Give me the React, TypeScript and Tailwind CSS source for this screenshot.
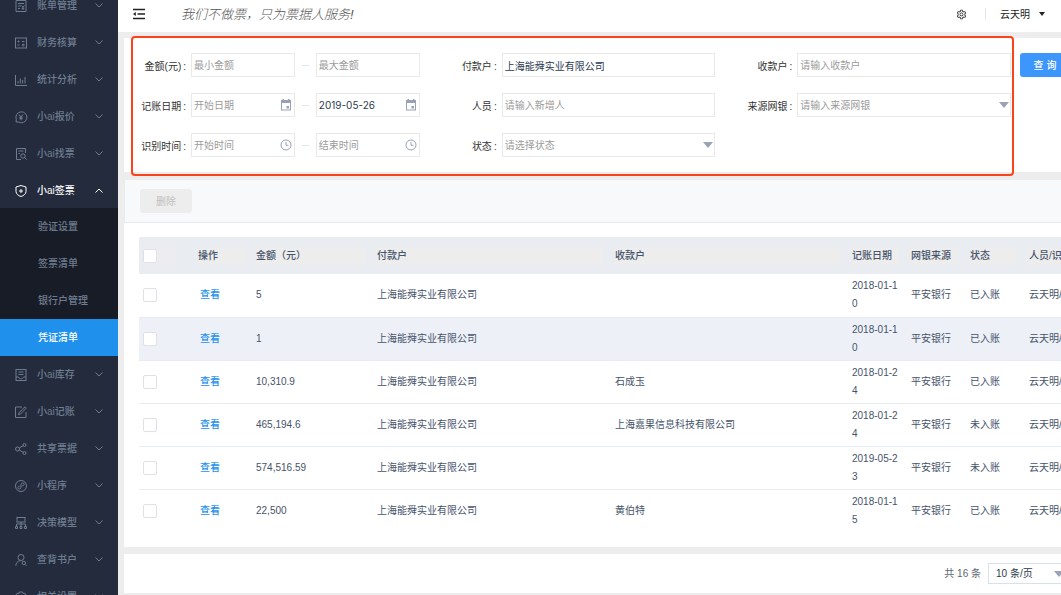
import type { ReactNode } from "react";
import { AiOutlineSetting } from "react-icons/ai";

const controlClass =
  "block h-6 w-full min-w-0 border border-[#e9e9e9] bg-white px-[2px] text-[10px] text-[#2c3a4f] outline-none placeholder:text-[#9b9b9b]";

const iconPaths: Record<string, ReactNode> = {
  bill: (
    <>
      <path d="M11 11.5H1V.5h10v11z" />
      <path d="M3 3.5h6M3 6h3M3 8.5h2M6.5 5.5L8 7.2l1.500-1.700M8 7.200V10M6.700 8.300h2.600" />
    </>
  ),
  calc: (
    <>
      <rect x="0.5" y="1" width="11" height="10" />
      <path d="M2.500 4.500h2M3.500 3.500v2M7 4.500h2.500M2.500 8h2M7 7.300h2.500M7 8.800h2.500" />
    </>
  ),
  chart: <path d="M.5 1v10.500H12M3 9.500V7M5.300 9.500V4.500M7.600 9.500V6M10 9.500V3" />,
  quote: (
    <>
      <path d="M1 11l.3-2.600A5.500 5.500 0 1 1 3.500 11H1z" />
      <path d="M4 3.500l2 2.500 2-2.500M6 6v3.300M4.300 6.200h3.400M4.300 7.700h3.400" />
    </>
  ),
  find: (
    <>
      <path d="M10.500 5V.5h-9v11H6M3.500 3h5M3.500 5.500h1.500" />
      <circle cx="8" cy="8" r="2.200" />
      <path d="M9.600 9.600l2 2" />
    </>
  ),
  shield: (
    <>
      <path d="M6 .5L11 2v4.500c0 2.500-2.500 4.300-5 5-2.500-.7-5-2.500-5-5V2L6 .5z" />
      <path d="M6 4v4M4 6h4" />
    </>
  ),
  stock: (
    <>
      <rect x="1" y="0.5" width="10" height="11" />
      <path d="M3.500 3h5M3.500 5.500h5M1 8h2.500c.5 1.300 1.300 1.800 2.500 1.800S8 9.300 8.500 8H11" />
    </>
  ),
  edit: (
    <>
      <path d="M7 1H.5v10.500H11V6" />
      <path d="M10 .8l1.300 1.300L5.500 8l-2 .6.600-2L10 .8z" />
    </>
  ),
  share: (
    <>
      <circle cx="2.500" cy="6" r="2" />
      <circle cx="9.500" cy="2" r="1.500" />
      <circle cx="9.500" cy="10" r="1.500" />
      <path d="M4.200 5l4-2.300M4.200 7l4 2.300" />
    </>
  ),
  mini: (
    <>
      <circle cx="6" cy="6" r="5.500" />
      <path d="M4.800 6.200c-1.300 0-2 .7-2 1.400 0 .8.700 1.400 1.500 1.400C5.400 9 6 8.200 6 7.500v-3C6 3.700 6.700 3 7.700 3c.9 0 1.500.6 1.500 1.400 0 .7-.7 1.400-2 1.400" />
    </>
  ),
  model: (
    <>
      <rect x="2" y="0.500" width="8" height="4.500" />
      <path d="M6 5v4M1.500 9V7h9v2" />
      <path d="M.5 9.500h2v2h-2zM5 9.500h2v2H5zM9.500 9.500h2v2h-2z" />
    </>
  ),
  user: (
    <>
      <circle cx="6" cy="3.500" r="3" />
      <path d="M.8 11.800C1 9 2.500 7 5.500 6.700" />
      <circle cx="8.800" cy="9" r="1.700" />
      <path d="M10 10.300l1.500 1.500" />
    </>
  ),
  gear: (
    <>
      <path d="M4.500 1h3l.7 1.500 1.800-.2 1.500 2.500L10.500 6l1 1.400L10 10l-1.800-.2-.7 1.500h-3l-.7-1.500L2 10 .5 7.400 1.500 6 .5 4.800 2 2.300l1.800.2L4.500 1z" />
      <circle cx="6" cy="6" r="1.800" />
    </>
  ),
};

const menu = [
  { icon: "bill", label: "账单管理" },
  { icon: "calc", label: "财务核算" },
  { icon: "chart", label: "统计分析" },
  { icon: "quote", label: "小ai报价" },
  { icon: "find", label: "小ai找票" },
  {
    icon: "shield",
    label: "小ai签票",
    children: ["验证设置", "签票清单", "银行户管理", "凭证清单"],
  },
  { icon: "stock", label: "小ai库存" },
  { icon: "edit", label: "小ai记账" },
  { icon: "share", label: "共享票据" },
  { icon: "mini", label: "小程序" },
  { icon: "model", label: "决策模型" },
  { icon: "user", label: "查背书户" },
  { icon: "gear", label: "相关设置" },
];

const rows = [
  { amount: "5", payee: "", date: "2018-01-10", status: "已入账" },
  { amount: "1", payee: "", date: "2018-01-10", status: "已入账" },
  { amount: "10,310.9", payee: "石成玉", date: "2018-01-24", status: "已入账" },
  { amount: "465,194.6", payee: "上海嘉果信息科技有限公司", date: "2018-01-24", status: "未入账" },
  { amount: "574,516.59", payee: "", date: "2019-05-23", status: "未入账" },
  { amount: "22,500", payee: "黄伯特", date: "2018-01-15", status: "已入账" },
];

function Caret() {
  return (
    <svg
      viewBox="0 0 10 6"
      className="pointer-events-none absolute top-1/2 right-[2px] h-[6px] w-[10px] -translate-y-1/2 fill-[#9aa3b8]"
    >
      <path d="M0 0h10L5 6z" />
    </svg>
  );
}

function CalendarIcon() {
  return (
    <svg viewBox="0 0 12 12" className="h-3 w-3">
      <path
        fillRule="evenodd"
        fill="#98a1b5"
        d="M2.500 0H4v1h4V0h1.500v1H11v10.500H1V1h1.500V0zM2 4v6.500h8V4H2zm4.500 3H9v2.500H6.500V7z"
      />
    </svg>
  );
}

function ClockIcon() {
  return (
    <svg viewBox="0 0 12 12" className="h-3 w-3" fill="none" stroke="#98a1b5">
      <circle cx="6" cy="6" r="5" />
      <path d="M6 3v3.300h2.500" />
    </svg>
  );
}

function Sidebar() {
  return (
    <nav className="w-[118px] shrink-0 overflow-hidden bg-[#242b3d] text-[10px] font-medium text-[#6f7d90]">
      <ul className="-mt-[13px]">
        {menu.map((item) => (
          <li key={item.label}>
            <button
              type="button"
              className={`flex h-[37px] w-full items-center pr-[15px] pl-[15px] ${
                item.children ? "text-white" : ""
              }`}
            >
              <svg viewBox="0 0 12 12" className="h-3 w-3 overflow-visible" fill="none" stroke="currentColor">
                {iconPaths[item.icon]}
              </svg>
              <span className="ml-[10px] flex-1 text-left">{item.label}</span>
              <svg viewBox="0 0 8 5" className="h-[5px] w-2" fill="none" stroke="currentColor">
                <path d={item.children ? "M.5 4.500L4 1l3.500 3.500" : "M.5.5L4 4 7.500.5"} />
              </svg>
            </button>
            {item.children && (
              <ul className="-mt-px bg-[#181c27]">
                {item.children.map((child) => (
                  <li key={child}>
                    <a
                      href="#"
                      className={`flex h-[37px] items-center pl-[38px] ${
                        child === "凭证清单" ? "bg-[#1f91ec] text-white" : ""
                      }`}
                    >
                      {child}
                    </a>
                  </li>
                ))}
              </ul>
            )}
          </li>
        ))}
      </ul>
    </nav>
  );
}

function Header() {
  return (
    <header className="flex h-8 shrink-0 items-center bg-white pr-4 pb-1 pl-[15px] text-[#222]">
      <button type="button" aria-label="收起菜单">
        <svg viewBox="0 0 12 12" className="h-3 w-3" stroke="currentColor" strokeWidth="1.300">
          <path d="M0 1.500h12M4.500 6H12M0 10.500h12" />
          <path d="M0 6l2.800-2v4z" fill="currentColor" stroke="none" />
        </svg>
      </button>
      <p className="ml-9 pt-[2px] text-[13px] leading-5 font-light text-[#555] italic">
        我们不做票，只为票据人服务!
      </p>
      <button type="button" aria-label="设置" className="ml-auto">
        <AiOutlineSetting className="h-[11px] w-[11px]" />
      </button>
      <span className="mr-[14px] ml-[18px] h-3 w-px bg-[#e6e6e6]" />
      <button type="button" className="flex items-center gap-[9px] text-[10px]">
        云天明
        <svg viewBox="0 0 6 4" className="h-1 w-[6px]" fill="currentColor">
          <path d="M0 0h6L3 4z" />
        </svg>
      </button>
    </header>
  );
}

function Field({ id, label, children }: { id: string; label: string; children: ReactNode }) {
  return (
    <div className="flex h-6 items-center">
      <label
        htmlFor={id}
        className="w-[82px] shrink-0 pt-[2px] pr-[5px] text-right text-[10px] text-[#333]"
      >
        {label}
        <span className="ml-[2px]">:</span>
      </label>
      <div className="relative min-w-0 flex-1">{children}</div>
    </div>
  );
}

function RangeField({
  id,
  label,
  from,
  to,
  value,
  icon,
}: {
  id: string;
  label: string;
  from: string;
  to: string;
  value?: string;
  icon?: ReactNode;
}) {
  return (
    <div className="flex h-6 items-center">
      <label
        htmlFor={id}
        className="w-[67px] shrink-0 pt-[2px] pr-[5px] text-right text-[10px] text-[#333]"
      >
        {label}
        <span className="ml-[2px]">:</span>
      </label>
      <div className="relative min-w-0 flex-1">
        <input id={id} className={controlClass} placeholder={from} />
        <span className="pointer-events-none absolute top-[6px] right-[3px]">{icon}</span>
      </div>
      <span className="mx-[7px] h-px w-[7px] bg-[#e4e4e4]" />
      <div className="relative min-w-0 flex-1">
        <input
          aria-label={to}
          className={`${controlClass} ${value ? "font-['Inter','Noto_Sans_CJK_SC',sans-serif]" : ""}`}
          placeholder={to}
          defaultValue={value}
        />
        <span className="pointer-events-none absolute top-[6px] right-[3px]">{icon}</span>
      </div>
    </div>
  );
}

function FilterPanel() {
  return (
    <section className="flex bg-white">
      <form className="relative grid flex-1 grid-cols-3 gap-y-4 py-[15px]">
        <RangeField id="amount" label="金额(元)" from="最小金额" to="最大金额" />
        <Field id="payer" label="付款户">
          <input id="payer" className={controlClass} defaultValue="上海能舜实业有限公司" />
        </Field>
        <Field id="payee" label="收款户">
          <input id="payee" className={controlClass} placeholder="请输入收款户" />
        </Field>
        <RangeField
          id="date"
          label="记账日期"
          from="开始日期"
          to="结束日期"
          value="2019-05-26"
          icon={<CalendarIcon />}
        />
        <Field id="person" label="人员">
          <input id="person" className={controlClass} placeholder="请输入新增人" />
        </Field>
        <Field id="bank" label="来源网银">
          <select id="bank" className={`${controlClass} appearance-none text-[#9b9b9b]!`}>
            <option>请输入来源网银</option>
          </select>
          <Caret />
        </Field>
        <RangeField id="time" label="识别时间" from="开始时间" to="结束时间" icon={<ClockIcon />} />
        <Field id="status" label="状态">
          <select id="status" className={`${controlClass} appearance-none text-[#9b9b9b]!`}>
            <option>请选择状态</option>
          </select>
          <Caret />
        </Field>
        <div className="pointer-events-none absolute -top-[2px] -right-[3px] -bottom-1 left-[7px] rounded border-2 border-[#fb4218]" />
      </form>
      <div className="pt-[15px] pr-4 pl-[9px]">
        <button
          type="button"
          className="block h-6 w-[50px] rounded-[3px] bg-[#3d96fb] text-[10px] font-medium text-white"
        >
          查 询
        </button>
      </div>
    </section>
  );
}

function Tick({ label }: { label: string }) {
  return (
    <input
      type="checkbox"
      aria-label={label}
      className="block h-[14px] w-[14px] appearance-none rounded-[2px] border border-[#dfe1e5] bg-white checked:bg-[#1f91ec]"
    />
  );
}

function RecordTable() {
  return (
    <table className="w-full table-fixed border-collapse text-left text-[10px] leading-[18px] text-[#46536a]">
      <colgroup>
        <col className="w-[53px]" />
        <col className="w-[58px]" />
        <col className="w-[121px]" />
        <col className="w-[238px]" />
        <col className="w-[237px]" />
        <col className="w-[59px]" />
        <col className="w-[59px]" />
        <col className="w-[59px]" />
        <col />
      </colgroup>
      <thead>
        <tr className="h-[37px] bg-[#e9ecf0]">
          <th className="pl-1">
            <div className="w-8 bg-[#ededed]">
              <Tick label="全选" />
            </div>
          </th>
          {["操作", "金额（元）", "付款户", "收款户", "记账日期", "网银来源", "状态", "人员/识别时间"].map(
            (title) => (
              <th key={title} className="px-[6px] font-medium whitespace-nowrap">
                <div className="bg-[#ededed]">{title}</div>
              </th>
            ),
          )}
        </tr>
      </thead>
      <tbody>
        {rows.map((row, i) => (
          <tr
            key={row.amount}
            className={`h-[43px] border-b border-[#e6ebf4] last:border-b-0 ${i === 1 ? "bg-[#edf1f7]" : ""}`}
          >
            <td className="pl-1">
              <Tick label={`选择 ${row.amount}`} />
            </td>
            <td className="px-2">
              <a href="#" className="font-medium text-[#1f91ec]">
                查看
              </a>
            </td>
            <td className="px-[6px]">{row.amount}</td>
            <td className="px-[6px]">上海能舜实业有限公司</td>
            <td className="px-[6px]">{row.payee}</td>
            <td className="px-[6px] break-all">{row.date}</td>
            <td className="px-[6px]">平安银行</td>
            <td className="px-[6px]">{row.status}</td>
            <td className="px-[6px] whitespace-nowrap">云天明/</td>
          </tr>
        ))}
      </tbody>
    </table>
  );
}

export default function App() {
  return (
    <div className="flex h-screen overflow-hidden bg-[#ededed] font-['Liberation_Sans','Noto_Sans_CJK_SC',sans-serif]">
      <Sidebar />
      <div className="flex min-w-0 flex-1 flex-col">
        <Header />
        <main className="flex-1 overflow-hidden pt-[6px] pl-[6px]">
          <div className="flex min-w-[962px] flex-col gap-2">
            <FilterPanel />
            <section className="bg-white">
              <div className="border-b border-l border-[#e8ebf0] bg-[#f8f9fb] py-[9px] pl-[15px]">
                <button
                  type="button"
                  disabled
                  className="block h-6 w-[52px] rounded-[3px] bg-[#ededed] text-[10px] text-[#bfbfbf]"
                >
                  删除
                </button>
              </div>
              <div className="pt-[14px] pb-[15px] pl-[15px]">
                <RecordTable />
              </div>
            </section>
            <footer className="-mt-px flex items-center justify-end bg-white py-[9px] pr-5 text-[10px] text-[#606773]">
              <label htmlFor="page-size">共 16 条</label>
              <div className="relative ml-[7px] w-[78px]">
                <select
                  id="page-size"
                  className="block h-[21px] w-full appearance-none border border-[#d9dfee] bg-white px-[7px] text-[#2c3a4f] outline-none"
                >
                  <option>10 条/页</option>
                </select>
                <Caret />
              </div>
            </footer>
          </div>
        </main>
      </div>
    </div>
  );
}
